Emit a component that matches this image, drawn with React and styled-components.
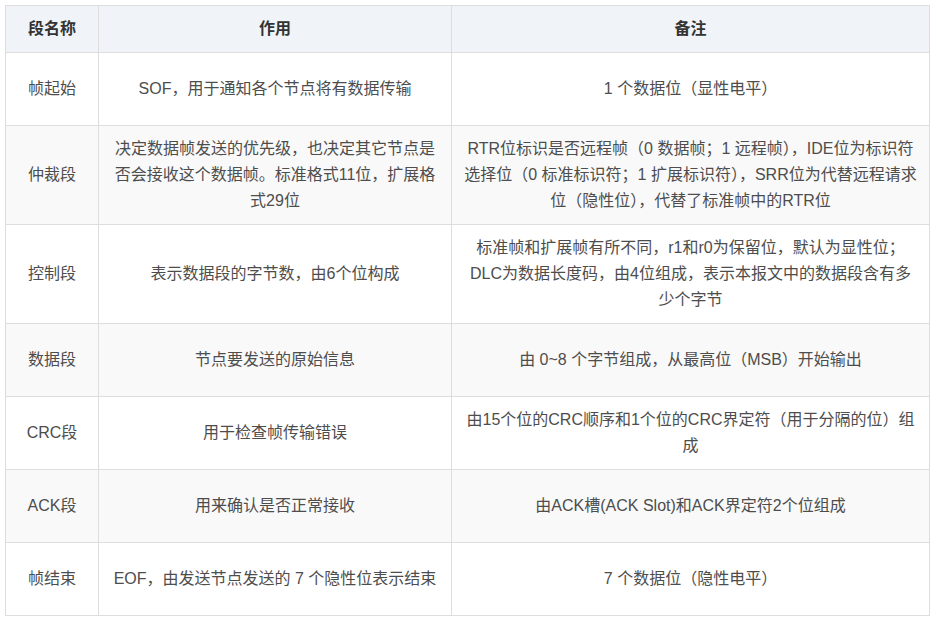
import styled, { createGlobalStyle } from "styled-components"

const Global = createGlobalStyle`
  body { margin: 0; background: #fff; font-family: "Liberation Sans", "Noto Sans CJK SC", sans-serif; }
`

const Wrap = styled.div`
  padding: 5px 6px 0 5px;
`

const Table = styled.table`
  width: 925px;
  table-layout: fixed;
  border-collapse: collapse;
  font-size: 16px;
  line-height: 26px;
  color: #4d4d4d;
`

const Th = styled.th`
  background: #f0f3f8;
  color: #333;
  font-weight: bold;
  border: 1px solid #ddd;
  padding: 10px 14px;
  text-align: center;
  width: ${(p) => p.w || "auto"};
`

const Tr = styled.tr`
  background: ${(p) => (p.odd ? "#f9f9f9" : "#fff")};
`

const Td = styled.td`
  border: 1px solid #ddd;
  padding: 10px 12px;
  text-align: center;
  height: 52px;
  &:first-child { padding: 10px 14px; }
`

const rows = [
  ["帧起始", "SOF，用于通知各个节点将有数据传输", "1 个数据位（显性电平）"],
  ["仲裁段", "决定数据帧发送的优先级，也决定其它节点是否会接收这个数据帧。标准格式11位，扩展格式29位", "RTR位标识是否远程帧（0 数据帧；1 远程帧），IDE位为标识符选择位（0 标准标识符；1 扩展标识符），SRR位为代替远程请求位（隐性位），代替了标准帧中的RTR位"],
  ["控制段", "表示数据段的字节数，由6个位构成", "标准帧和扩展帧有所不同，r1和r0为保留位，默认为显性位； DLC为数据长度码，由4位组成，表示本报文中的数据段含有多少个字节"],
  ["数据段", "节点要发送的原始信息", "由 0~8 个字节组成，从最高位（MSB）开始输出"],
  ["CRC段", "用于检查帧传输错误", "由15个位的CRC顺序和1个位的CRC界定符（用于分隔的位）组成"],
  ["ACK段", "用来确认是否正常接收", "由ACK槽(ACK Slot)和ACK界定符2个位组成"],
  ["帧结束", "EOF，由发送节点发送的 7 个隐性位表示结束", "7 个数据位（隐性电平）"],
]

export default function App() {
  return (
    <Wrap>
      <Global />
      <Table>
        <thead>
          <tr>
            <Th w="64px">段名称</Th>
            <Th w="324px">作用</Th>
            <Th>备注</Th>
          </tr>
        </thead>
        <tbody>
          {rows.map((r, i) => (
            <Tr key={i} odd={i % 2 === 1}>
              {r.map((c, j) => (
                <Td key={j}>{c}</Td>
              ))}
            </Tr>
          ))}
        </tbody>
      </Table>
    </Wrap>
  )
}
